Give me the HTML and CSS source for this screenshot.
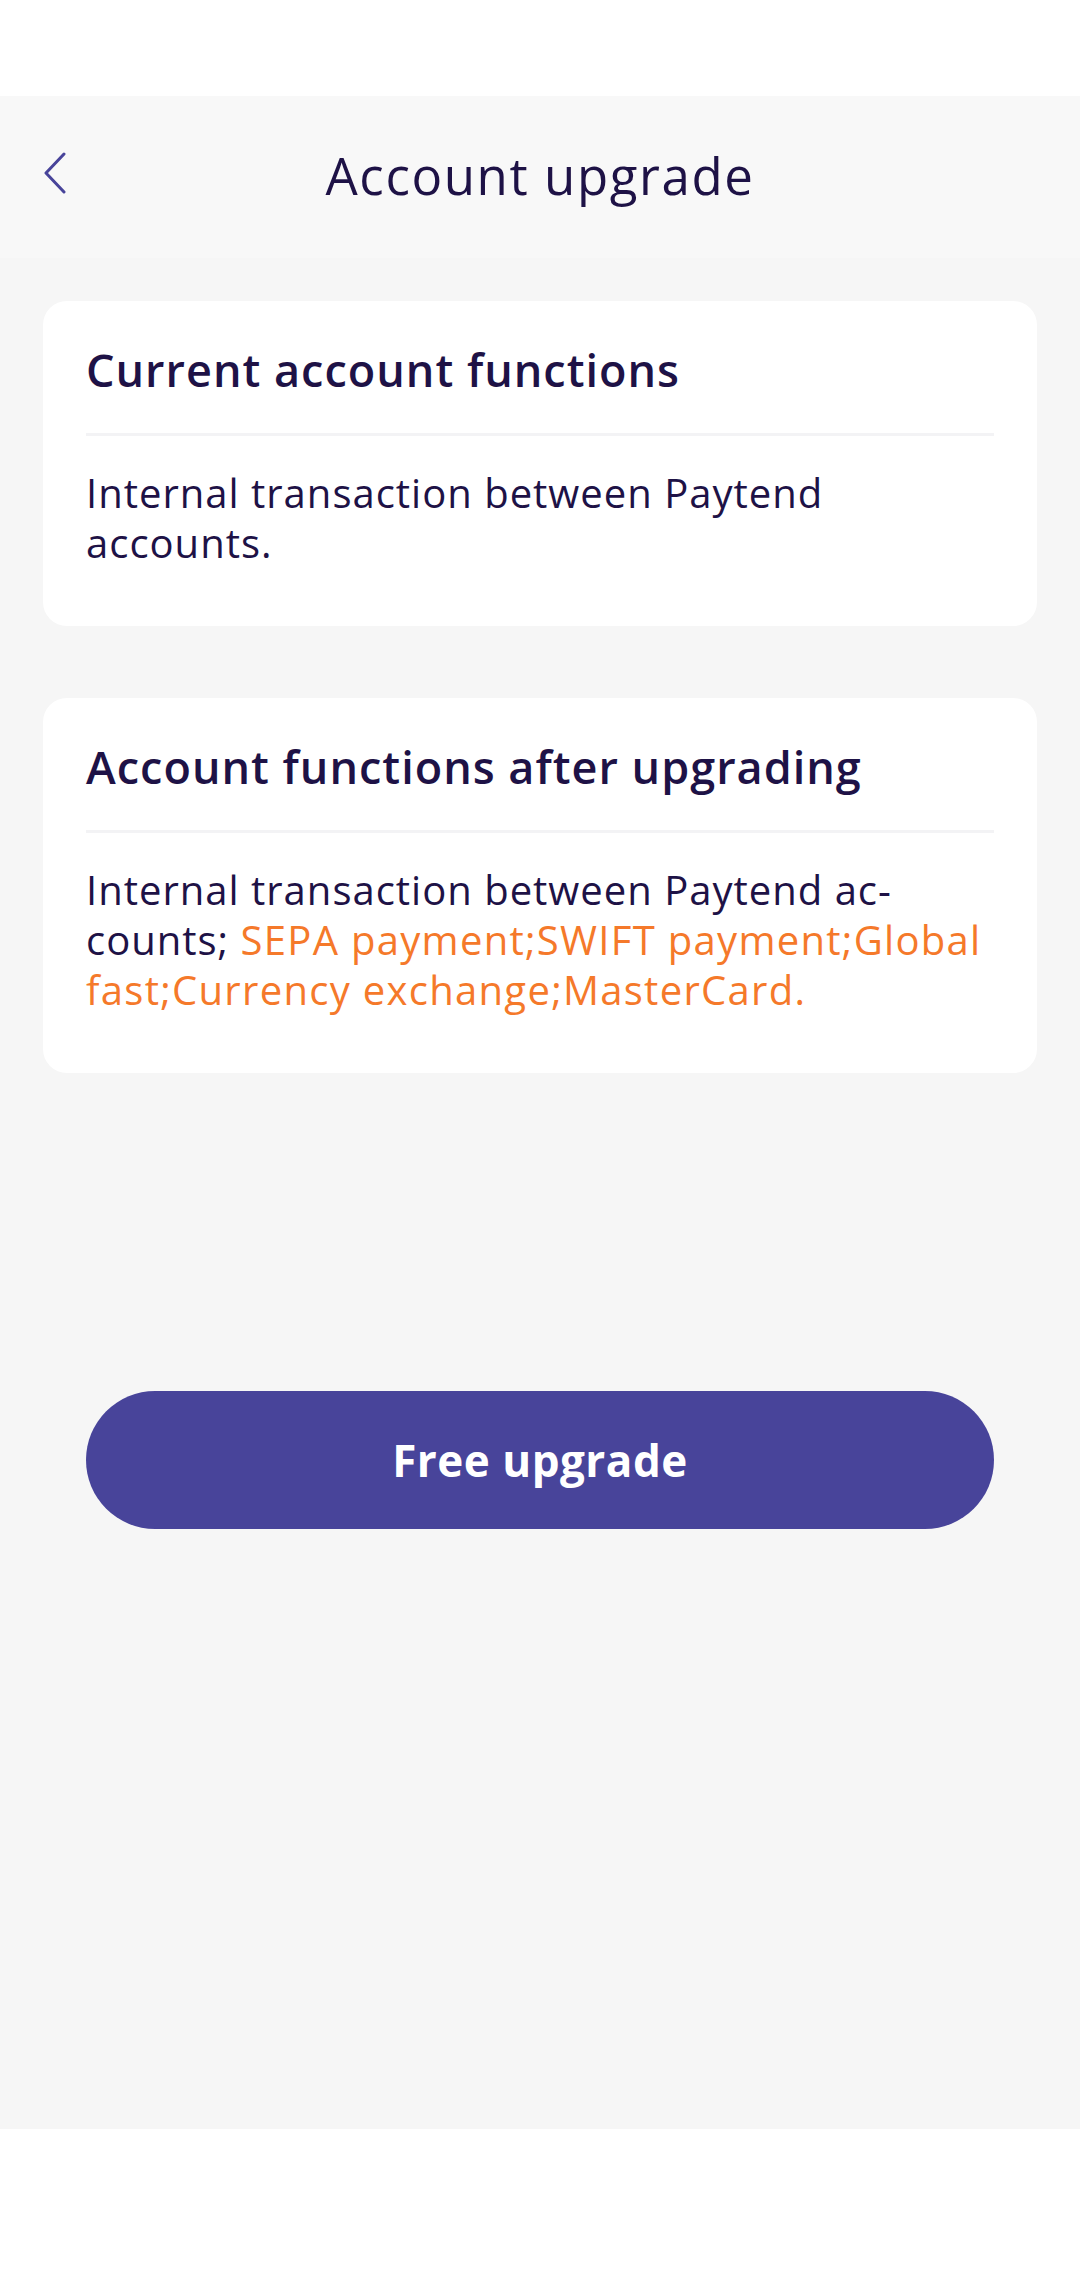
FILE: index.html
```html
<!DOCTYPE html>
<html lang="en">
<head>
<meta charset="utf-8">
<title>Account upgrade</title>
<link rel="stylesheet" href="styles.css">
</head>
<body>
<div class="statusbar"></div>
<header class="topbar">
  <button class="back" aria-label="Back">
    <svg width="24" height="42" viewBox="0 0 24 42"><path d="M21 2 L3 21 L21 40" fill="none" stroke="#48449a" stroke-width="3" stroke-linecap="round" stroke-linejoin="round"/></svg>
  </button>
  <h1 class="title">Account upgrade</h1>
  <span></span>
</header>
<main class="content">
  <section class="card">
    <h2 class="card-title">Current account functions</h2>
    <div class="divider"></div>
    <p class="card-text">Internal transaction between Paytend<br>accounts.</p>
  </section>
  <section class="card card-second">
    <h2 class="card-title">Account functions after upgrading</h2>
    <div class="divider"></div>
    <p class="card-text">Internal transaction between Paytend ac-<br>counts; <span class="hl">SEPA payment;SWIFT payment;Global<br>fast;Currency exchange;MasterCard.</span></p>
  </section>
  <button class="upgrade">Free upgrade</button>
</main>
<div class="bottombar"></div>
</body>
</html>
```
FILE: styles.css
```css
* { box-sizing: border-box; }
html, body { margin: 0; padding: 0; }
body {
  width: 1080px;
  height: 2280px;
  background: #ffffff;
  font-family: "Open Sans", "Noto Sans", sans-serif;
  color: #1e1246;
  display: flex;
  flex-direction: column;
}
.statusbar { height: 96px; background: #ffffff; }
.topbar {
  height: 162px;
  background: #f8f8f8;
  display: grid;
  grid-template-columns: 1fr auto 1fr;
  align-items: center;
}
.back {
  justify-self: start;
  margin-left: 43px;
  padding: 0;
  border: 0;
  background: transparent;
  display: flex;
  margin-top: -8px;
}
.title {
  margin: 0;
  font-size: 51px;
  font-weight: 400;
  letter-spacing: 1.6px;
  color: #1e1246;
  margin-top: -4px;
}
.content {
  height: 1871px;
  background: #f6f6f6;
  padding: 43px 43px 0 43px;
  display: flex;
  flex-direction: column;
}
.card {
  background: #ffffff;
  border-radius: 24px;
  padding: 43px 43px 58px 43px;
}
.card-second { margin-top: 72px; }
.card-title {
  margin: 0;
  font-size: 45px;
  font-weight: 600;
  line-height: 52px;
  letter-spacing: 1px;
  color: #1e1246;
}
.divider {
  height: 3px;
  background: #f3f3f5;
  margin-top: 37px;
}
.card-text {
  margin: 32px 0 0 0;
  font-size: 40px;
  line-height: 50px;
  letter-spacing: 1px;
  color: #1e1246;
}
.hl { color: #f5792a; letter-spacing: 1.3px; }
.upgrade {
  margin: 318px 43px 0 43px;
  height: 138px;
  border: 0;
  border-radius: 69px;
  background: #48449a;
  color: #ffffff;
  font-family: "Open Sans", "Noto Sans", sans-serif;
  font-size: 44px;
  font-weight: 700;
  letter-spacing: 0.5px;
}
.bottombar { flex: 1; background: #ffffff; }
```
